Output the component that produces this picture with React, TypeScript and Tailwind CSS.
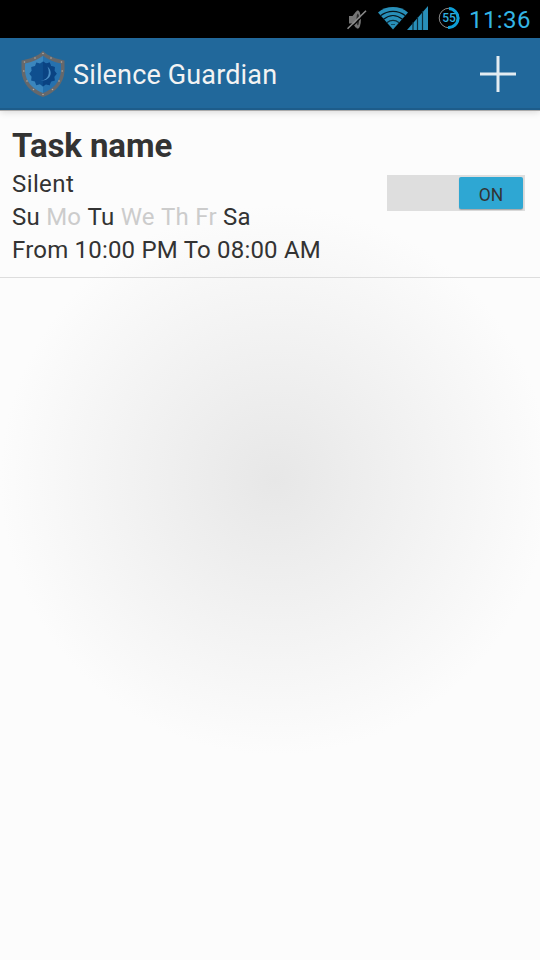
import { useState } from 'react';

const days = [
  { label: 'Su', active: true },
  { label: 'Mo', active: false },
  { label: 'Tu', active: true },
  { label: 'We', active: false },
  { label: 'Th', active: false },
  { label: 'Fr', active: false },
  { label: 'Sa', active: true },
];

const rivets = [
  [22, 2.5], [14, 7], [30, 7], [3.5, 11], [40.5, 11], [2.8, 20], [41.2, 20],
  [6, 30], [38, 30], [12.5, 38.5], [31.5, 38.5], [22, 43.5],
];

function MutedIcon() {
  return (
    <svg width="20" height="22" viewBox="0 0 20 22" fill="none">
      <path d="M2 7h3.500L9.500 2v17.500L5.500 14.500H2z" fill="#757575" />
      <ellipse cx="10.800" cy="10.500" rx="3.100" ry="9.300" fill="#757575" />
      <ellipse cx="10.800" cy="10.500" rx="1.300" ry="6" fill="#2c2c2c" />
      <path d="M2 20.800 19.500 3.300" stroke="#000" strokeWidth="1.300" />
      <path d="M.5 19.800 19 1.800" stroke="#8b8b8b" strokeWidth="1.600" />
    </svg>
  );
}

function WifiIcon() {
  return (
    <svg width="30" height="23" viewBox="0 0 30 23" fill="none">
      <path d="M0 5.500C8.500-1.800 21.500-1.800 30 5.500L15 22.500z" fill="#288fb9" />
      <path d="M2.500 8.800c7.500-6 17.500-6 25 0" stroke="#06141b" strokeWidth="1.200" />
      <path d="M5.500 12.300c6-4.800 13-4.800 19 0" stroke="#06141b" strokeWidth="1.200" />
      <path d="M8.800 15.700c4-3 8.400-3 12.400 0" stroke="#0b2c3a" strokeWidth="1.200" />
      <path d="M13 17.500h4" stroke="#134a60" strokeWidth="1" />
    </svg>
  );
}

function SignalIcon() {
  return (
    <svg width="21" height="24" viewBox="0 0 21 24">
      <path d="M0 24 21 0v24z" fill="#288fb9" />
      <path d="M6 16v8M10.500 11v13M15.500 5v19" stroke="#0b2c3a" strokeWidth="1.200" />
    </svg>
  );
}

function BatteryIcon() {
  return (
    <div className="relative flex h-[22px] w-[22px] items-center justify-center">
      <svg className="absolute inset-0" width="22" height="22" viewBox="0 0 22 22" fill="none">
        <circle cx="11" cy="11" r="9.800" stroke="#8a8a8a" strokeWidth="1" />
        <path d="M11 1.500a9.500 9.500 0 1 1-1 19" stroke="#0d9fd8" strokeWidth="3" />
      </svg>
      <span className="relative text-[12px] leading-[22px] font-medium text-[#2fb1e2]">55</span>
    </div>
  );
}

function ShieldLogo() {
  return (
    <svg width="44" height="46" viewBox="0 0 44 46">
      <path d="M22 0C17 5 9 8 .5 9.500V20C1 32 10 42 22 46c12-4 21-14 21.500-26V9.500C35 8 27 5 22 0z" fill="#66686b" />
      <path d="M22 4.800C17.500 8.500 11 11.300 4 12.600V20C4.500 30.500 12 38.500 22 42z" fill="#3b86bd" />
      <path d="M22 4.800c4.500 3.700 11 6.500 18 7.800V20c-.5 10.500-8 18.500-18 22z" fill="#2671ae" />
      <path
        d="M22 10.500l3 2 3.700-1 1.300 3.500 3.800 1-.4 3.800 2.300 3-2.500 3 .5 3.800-3.800 1-1.300 3.600-3.700-1-3 2.300-3-2.300-3.700 1-1.300-3.600-3.800-1 .5-3.800L8.300 22.800l2.300-3-.4-3.800 3.800-1 1.300-3.500 3.700 1z"
        fill="#0f4f8f"
      />
      <path d="M22 10.500l3 2 3.700-1 1.300 3.500 3.800 1-.4 3.800 2.300 3-2.500 3 .5 3.800-3.800 1-1.300 3.600-3.700-1-3 2.300z" fill="#0a4383" />
      <path d="M26.500 15.500c6.500 6 2.500 14.500-6.500 14.200 7.500-1.200 9.500-7.500 6.500-14.200z" fill="#4a8dc4" />
      {rivets.map(([x, y]) => (
        <circle key={`${x}-${y}`} cx={x} cy={y} r="0.800" fill="#b3aaa0" />
      ))}
    </svg>
  );
}

function StatusBar() {
  return (
    <div className="flex h-[38px] items-start bg-black pl-[347px]">
      <div className="mt-[9px]"><MutedIcon /></div>
      <div className="mt-[7px] ml-[11px]"><WifiIcon /></div>
      <div className="mt-[6px] -ml-px"><SignalIcon /></div>
      <div className="mt-[7px] ml-[10px]"><BatteryIcon /></div>
      <span className="mt-[5px] ml-[9px] text-[24px] leading-[30px] tracking-[0.4px] text-[#33b5e5]">11:36</span>
    </div>
  );
}

function ActionBar() {
  return (
    <header className="flex h-[72px] items-center border-b-2 border-[#1d5c8a] bg-[#21689b] pt-[2px] pl-[21px] shadow-[0_1px_0_#aaa,0_2px_7px_rgba(0,0,0,0.15)]">
      <ShieldLogo />
      <h1 className="ml-[8px] pt-px text-[27px] leading-[36px] tracking-[0.15px] text-[#f3f3f3]">Silence Guardian</h1>
      <button className="mr-[24px] ml-auto" aria-label="Add task">
        <svg width="36" height="36" viewBox="0 0 36 36">
          <path d="M0 18h36M18 0v36" stroke="#e3ecf2" strokeWidth="3" />
        </svg>
      </button>
    </header>
  );
}

export default function App() {
  const [enabled, setEnabled] = useState(true);

  return (
    <div className="flex h-[960px] w-[540px] flex-col overflow-hidden bg-[#fcfcfc] bg-[radial-gradient(circle_275px_at_275px_480px,#e7e7e7,#fcfcfc)] font-['Roboto',sans-serif] text-[#333]">
      <StatusBar />
      <ActionBar />
      <div className="flex h-[168px] justify-between border-b border-[#dddddd] pt-[15px] pr-[15px] pl-[12px]">
        <div className="text-[24px] leading-[33px] tracking-[0.2px] whitespace-nowrap">
          <h2 className="mb-[2px] text-[33px] leading-[41px] font-bold tracking-[-0.1px]">Task name</h2>
          <p className="tracking-[0.4px]">Silent</p>
          <p className="flex gap-[6.3px] tracking-[0.2px]">
            {days.map((day) => (
              <span key={day.label} className={day.active ? 'text-[#333]' : 'text-[#cccccc]'}>
                {day.label}
              </span>
            ))}
          </p>
          <p>From 10:00 PM To 08:00 AM</p>
        </div>
        <button
          onClick={() => setEnabled(!enabled)}
          className={`mt-[50px] flex h-[36px] w-[138px] bg-[#dedede] px-[2px] pt-[2px] ${enabled ? 'justify-end' : 'justify-start'}`}
        >
          <span className="h-[32px] w-[64px] rounded-[2px] bg-[#2ea7d3] pt-px text-center text-[17.5px] leading-[34px] text-[#333] shadow-[0_1px_1px_rgba(0,0,0,0.25)]">
            {enabled ? 'ON' : 'OFF'}
          </span>
        </button>
      </div>
    </div>
  );
}
